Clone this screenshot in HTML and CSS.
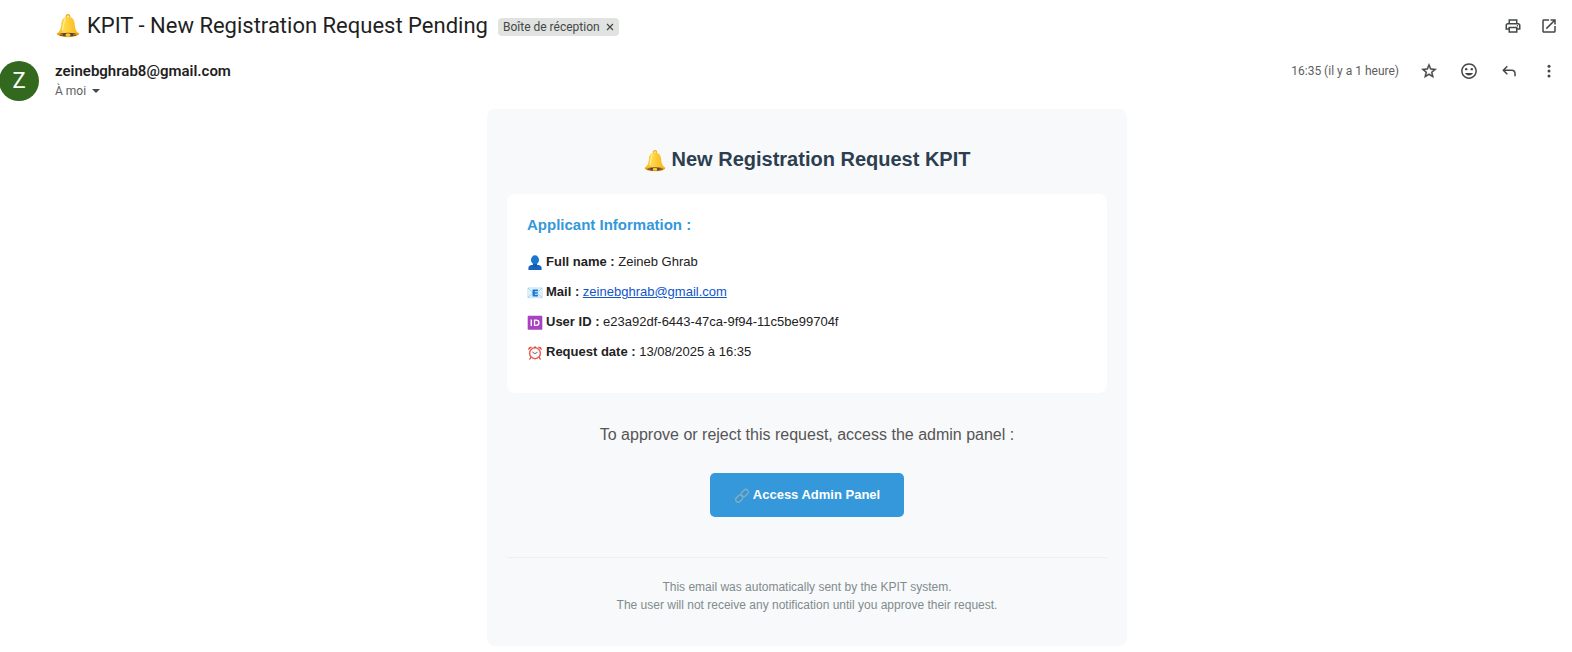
FILE: index.html
```html
<!DOCTYPE html>
<html lang="fr">
<head>
<meta charset="utf-8">
<meta name="viewport" content="width=device-width, initial-scale=1">
<title>KPIT - New Registration Request Pending</title>
<link rel="stylesheet" href="styles.css">
</head>
<body>
<svg class="defs" aria-hidden="true">
  <defs>
    <linearGradient id="gold" x1="0" x2="1" y1="0" y2="0">
      <stop offset="0" stop-color="#f9ab16"/><stop offset=".35" stop-color="#ffd84a"/><stop offset="1" stop-color="#fbb414"/>
    </linearGradient>
    <symbol id="bell" viewBox="0 0 24 24">
      <circle cx="12" cy="2.4" r="1.7" fill="none" stroke="#f4a916" stroke-width="1.4"/>
      <path d="M12 2.8c4 0 6.2 2.6 6.6 6.6.4 5 1.2 7.600 4.400 10.200.8 2.200-5.500 3.600-11 3.600S.2 21.800 1 19.600c3.200-2.600 4-5.200 4.400-10.200C5.800 5.400 8 2.800 12 2.800z" fill="url(#gold)"/>
      <path d="M9.300 5.200C7.500 7 7.600 12 6.600 16" fill="none" stroke="#ffec95" stroke-width="1.500" stroke-linecap="round"/>
      <ellipse cx="12" cy="20.700" rx="8.800" ry="1.900" fill="#5d4037"/>
      <ellipse cx="12" cy="21" rx="2.600" ry="1.700" fill="#ffca28"/>
      <path d="M1 19.600c3 1 6 1.200 6 1.200M23 19.600c-3 1-6 1.200-6 1.200" stroke="#e2951a" fill="none"/>
    </symbol>
  </defs>
</svg>

<header class="subject">
  <h1 class="subject-title"><svg class="subject-bell" aria-hidden="true"><use href="#bell"/></svg>KPIT - New Registration Request Pending</h1>
  <span class="label">Boîte de réception
    <button class="label-close" type="button" aria-label="Supprimer le libellé"><svg viewBox="0 0 8 8"><path d="M1 1l6 6M7 1L1 7"/></svg></button>
  </span>
  <div class="tools">
    <button class="icon-button" type="button" aria-label="Imprimer"><svg viewBox="0 0 24 24"><path d="M19 8h-1V3H6v5H5c-1.660 0-3 1.340-3 3v6h4v4h12v-4h4v-6c0-1.660-1.340-3-3-3zM8 5h8v3H8V5zm8 12v2H8v-4h8v2zm2-2v-2H6v2H4v-4c0-.550.450-1 1-1h14c.550 0 1 .450 1 1v4h-2z"/><circle cx="18" cy="11.500" r="1"/></svg></button>
    <button class="icon-button" type="button" aria-label="Nouvelle fenêtre"><svg viewBox="0 0 24 24"><path d="M19 19H5V5h7V3H5c-1.110 0-2 .900-2 2v14c0 1.100.890 2 2 2h14c1.100 0 2-.900 2-2v-7h-2v7zM14 3v2h3.590l-9.830 9.830 1.410 1.410L19 6.410V10h2V3h-7z"/></svg></button>
  </div>
</header>

<section class="message-head">
  <div class="avatar" aria-hidden="true">Z</div>
  <div class="sender">
    <div class="sender-mail">zeinebghrab8@gmail.com</div>
    <button class="recipient" type="button">À moi<span class="caret"></span></button>
  </div>
  <time class="time">16:35 (il y a 1 heure)</time>
  <div class="actions">
    <button class="icon-button" type="button" aria-label="Suivre"><svg viewBox="0 0 24 24"><path stroke="#444746" stroke-width=".5" d="M22 9.240l-7.190-.620L12 2 9.190 8.630 2 9.240l5.460 4.730L5.820 21 12 17.270 18.180 21l-1.630-7.030L22 9.240zM12 15.400l-3.760 2.270 1-4.280-3.320-2.880 4.380-.380L12 6.100l1.710 4.040 4.380.380-3.320 2.880 1 4.280L12 15.400z"/></svg></button>
    <button class="icon-button" type="button" aria-label="Ajouter une réaction"><svg viewBox="0 0 24 24"><circle cx="8.300" cy="9.500" r="1.600"/><circle cx="15.700" cy="9.500" r="1.600"/><path d="M12 18c2.400 0 4.400-1.300 5.300-3.300H6.700C7.600 16.700 9.600 18 12 18z"/><path d="M12 1.500C6.200 1.500 1.500 6.200 1.500 12S6.200 22.500 12 22.500 22.500 17.800 22.500 12 17.800 1.500 12 1.500zm0 19c-4.700 0-8.500-3.800-8.500-8.500S7.300 3.500 12 3.500s8.500 3.800 8.500 8.500-3.800 8.500-8.500 8.500z"/></svg></button>
    <button class="icon-button" type="button" aria-label="Répondre"><svg viewBox="0 0 24 24"><path d="M19 19v-4c0-.830-.290-1.540-.880-2.120C17.540 12.290 16.830 12 16 12H6.830l3.590 3.600L9 17l-6-6 6-6 1.420 1.400L6.830 10H16c1.380 0 2.560.490 3.540 1.460C20.510 12.440 21 13.620 21 15v4h-2z"/></svg></button>
    <button class="icon-button" type="button" aria-label="Plus"><svg viewBox="0 0 24 24"><circle cx="12" cy="5.500" r="2"/><circle cx="12" cy="12" r="2"/><circle cx="12" cy="18.500" r="2"/></svg></button>
  </div>
</section>

<main class="mail">
  <article class="card">
    <h2 class="card-title"><svg class="card-bell" aria-hidden="true"><use href="#bell"/></svg>New Registration Request KPIT</h2>
    <section class="info">
      <h3 class="info-title">Applicant Information :</h3>
      <ul class="info-list">
        <li><svg class="emoji" viewBox="0 0 16 16" aria-hidden="true"><path d="M1 16v-2.500C1 11 4.500 10.300 8 10.300s7 .7 7 3.200V16z" fill="#1565c0"/><path d="M5.800 8h4.400v3.200c-.8 1.800-3.600 1.800-4.400 0z" fill="#1258a8"/><ellipse cx="8" cy="5.200" rx="4.300" ry="4.900" fill="#1976d2"/></svg><strong>Full name :</strong> Zeineb Ghrab</li>
        <li><svg class="emoji" viewBox="0 0 16 16" aria-hidden="true"><path d="M.3 3h15.400v10.600H.3z" fill="#e3f3fc" stroke="#a9d6f0" stroke-width=".6"/><path d="M.5 3.200L6 8.300.5 13.400M15.500 3.200L10 8.300l5.500 5.100" fill="none" stroke="#86c3e8" stroke-width=".8"/><path d="M5.400 4.800h5.800v1.900H7.800v1h3v1.500h-3v1.100h3.400v1.900H5.400z" fill="#1976d2"/></svg><strong>Mail :</strong> <a class="mail-link" href="mailto:zeinebghrab@gmail.com">zeinebghrab@gmail.com</a></li>
        <li><svg class="emoji" viewBox="0 0 16 16" aria-hidden="true"><rect x=".2" y=".8" width="15.600" height="15" rx="1" fill="#a743c1"/><path d="M4 4.800v7M7.500 5.500v5.600h1.700c2 0 3-1 3-2.800s-1-2.800-3-2.800z" fill="none" stroke="#fff" stroke-width="1.400"/></svg><strong>User ID :</strong> e23a92df-6443-47ca-9f94-11c5be99704f</li>
        <li><svg class="emoji" viewBox="0 0 16 16" aria-hidden="true"><path d="M3.500 13l-1.300 2.500M12.500 13l1.300 2.500" stroke="#b53a35" stroke-width="1.200"/><path d="M1 5.500C0 3 2.500.8 5 2.200zM15 5.500c1-2.500-1.500-4.700-4-3.300z" fill="#ef4b45"/><circle cx="8" cy="8.800" r="5.800" fill="#fafafa" stroke="#ee5a53" stroke-width="1.500"/><path d="M5.200 7.600L8 9.200l2.600-1.500" fill="none" stroke="#555" stroke-width=".9"/><path d="M7 1.500h2V3H7z" fill="#c7413c"/></svg><strong>Request date :</strong> 13/08/2025 à 16:35</li>
      </ul>
    </section>
    <p class="prompt">To approve or reject this request, access the admin panel :</p>
    <a class="cta" href="#admin"><svg class="emoji" viewBox="0 0 16 16" fill="none" stroke="#84aebb" stroke-width="1.500" aria-hidden="true"><rect x="-4.200" y="-2.700" width="8.400" height="5.400" rx="2.700" transform="translate(11 5.300) rotate(-45)"/><rect x="-4.200" y="-2.700" width="8.400" height="5.400" rx="2.700" transform="translate(5 11.300) rotate(-45)"/></svg>Access Admin Panel</a>
    <footer class="card-footer">This email was automatically sent by the KPIT system.<br>The user will not receive any notification until you approve their request.</footer>
  </article>
</main>
</body>
</html>
```
FILE: styles.css
```css
* { box-sizing: border-box; }
body {
  margin: 0;
  background: #fff;
  color: #222;
  font-family: "Liberation Sans", Arial, sans-serif;
}
button {
  border: 0;
  padding: 0;
  background: none;
  font: inherit;
  color: inherit;
  cursor: pointer;
}
.defs { position: absolute; width: 0; height: 0; }

.subject {
  display: flex;
  align-items: center;
  height: 52px;
  padding: 0 13px 0 55px;
  font-family: Roboto, sans-serif;
}
.subject-title {
  display: flex;
  align-items: center;
  gap: 6px;
  margin: 0;
  font-size: 22px;
  line-height: 28px;
  font-weight: 400;
  color: #1f1f1f;
}
.subject-bell { width: 26px; height: 24px; }
.label {
  display: flex;
  align-items: center;
  gap: 6px;
  height: 18px;
  margin: 2px 0 0 10px;
  padding: 0 5px;
  border-radius: 4px;
  background: #e1e3e1;
  color: #444746;
  font-size: 12px;
}
.label-close { display: flex; }
.label-close svg { width: 8px; height: 8px; stroke: #444746; stroke-width: 1.2; }
.tools { display: flex; gap: 16px; margin-left: auto; }
.icon-button {
  display: flex;
  align-items: center;
  justify-content: center;
  width: 20px;
  height: 20px;
}
.icon-button svg { width: 18px; height: 18px; fill: #444746; }

.message-head {
  display: flex;
  align-items: flex-start;
  padding: 9px 13px 8px 0;
  font-family: Roboto, sans-serif;
}
.avatar {
  width: 40px;
  height: 40px;
  margin: 0 16px 0 -1px;
  border-radius: 50%;
  background: #33691e;
  color: #fff;
  font-size: 22px;
  line-height: 40px;
  text-align: center;
}
.sender-mail { font-weight: 600; font-size: 15px; line-height: 20px; color: #1f1f1f; }
.recipient {
  display: flex;
  align-items: center;
  gap: 6px;
  font-size: 12px;
  line-height: 20px;
  color: #5e5e5e;
}
.caret {
  border: 4px solid transparent;
  border-top-color: #444746;
  border-bottom: 0;
}
.time { margin: 0 20px 0 auto; font-size: 12px; line-height: 20px; color: #5e5e5e; }
.actions { display: flex; gap: 20px; }

.mail { padding: 0 13px 0 55px; }
.card {
  max-width: 640px;
  margin: 0 auto;
  padding: 20px 20px 32px;
  border-radius: 8px;
  background: #f8f9fb;
  text-align: center;
}
.card-title {
  display: flex;
  align-items: center;
  justify-content: center;
  gap: 6px;
  margin: 15px 0 20px;
  font-size: 20px;
  line-height: 30px;
  color: #2c3e50;
}
.card-bell { width: 22px; height: 22px; margin-top: 4px; }
.info {
  padding: 20px 20px 31px;
  border-radius: 8px;
  background: #fff;
  text-align: left;
}
.info-title { margin: 0 0 16px; font-size: 15px; line-height: 22px; color: #3498db; }
.info-list {
  display: flex;
  flex-direction: column;
  gap: 10px;
  margin: 0;
  padding: 0;
  list-style: none;
  font-size: 13px;
  line-height: 20px;
}
.emoji {
  width: 16px;
  height: 15px;
  margin-right: 3px;
  vertical-align: -4px;
}
.mail-link { color: #1155cc; }
.prompt { margin: 31px 0 27px; font-size: 16px; line-height: 22px; color: #555; }
.cta {
  display: inline-block;
  padding: 12px 24px;
  border-radius: 5px;
  background: #3498db;
  color: #fff;
  font-size: 13px;
  line-height: 20px;
  font-weight: 700;
  text-decoration: none;
  vertical-align: top;
}
.card-footer {
  margin-top: 40px;
  padding-top: 20px;
  border-top: 1px solid #ecf0f1;
  font-size: 12px;
  line-height: 18px;
  color: #7f8c8d;
}
```
